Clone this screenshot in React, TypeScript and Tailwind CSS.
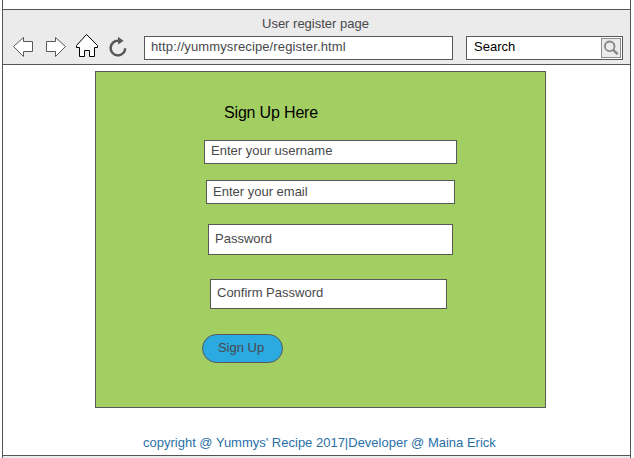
import React from 'react';

function Toolbar() {
  return (
    <header className="h-[56px] border-y border-[#555557] bg-[#ebebeb]">
      <h1 className="h-[26px] pl-[259px] pt-[4px] text-[13px] leading-[20px]">User register page</h1>
      <div className="flex h-[24px]">
        <nav className="w-[141px] shrink-0">
          <svg className="-mt-[3px]" width="141" height="27" viewBox="3 33 141 27" fill="white" stroke="#58585a">
            <path strokeWidth="1" d="M13.5 46.5 23.5 37.5V41.5H32.5V51.5H23.5V56.5Z" />
            <path strokeWidth="1" d="M65.5 46.5 55.5 37.5V41.5H46.5V51.5H55.5V56.5Z" />
            <path stroke="#000" d="M86.5 34.5 76.5 45.5V47.5H79.5V56.5H84.5V50.5H89.5V56.5H94.5V47.5H97.5V45.5Z" />
            <path fill="none" strokeWidth="2.5" d="M125.2 48.2A7.3 7.3 0 1 1 118.5 40.8" />
            <path stroke="none" fill="#58585a" d="M118 36.8 123.6 40.8 118.2 44.4Z" />
          </svg>
        </nav>
        <input
          aria-label="Address"
          defaultValue="http://yummysrecipe/register.html"
          className="mr-[13px] h-[24px] w-[309px] shrink-0 border border-[#58585a] bg-white pb-[3px] pl-[6px] text-[13px] tracking-[0.12px] outline-none"
        />
        <div className="flex h-[24px] w-[157px] shrink-0 border border-[#58585a] bg-white p-px">
          <input aria-label="Search" defaultValue="Search" className="w-[133px] pb-[3px] pl-[6px] text-[13px] text-black outline-none" />
          <button aria-label="Run search" className="h-[20px] w-[20px] border border-[#8c8c8e] bg-[#ebebeb]">
            <svg width="18" height="18" viewBox="0 0 18 18" fill="none" stroke="#858587">
              <circle cx="7.7" cy="7.3" r="4.8" strokeWidth="1.8" />
              <path d="m11.2 10.9 4.4 4.3" strokeWidth="2.4" />
            </svg>
          </button>
        </div>
      </div>
    </header>
  );
}

function SignUpForm() {
  const field = 'block border border-[#58585a] bg-white pl-[6px] text-[13px] text-[#48484a] placeholder:text-[#48484a] placeholder:opacity-100 outline-none';
  return (
    <form className="ml-[92px] h-[337px] w-[451px] border border-[#58585a] bg-[#a3cf62]">
      <h2 className="ml-[128px] mt-[30px] h-[38px] text-[16px] leading-[22px] tracking-[-0.17px] text-black">Sign Up Here</h2>
      <input className={`${field} ml-[108px] h-[24px] w-[253px] pb-[3px]`} placeholder="Enter your username" />
      <input className={`${field} ml-[110px] mt-[16px] h-[24px] w-[249px] pb-[2px]`} placeholder="Enter your email" />
      <input className={`${field} ml-[112px] mt-[20px] h-[31px] w-[245px] pb-[2px]`} placeholder="Password" />
      <input className={`${field} ml-[114px] mt-[24px] h-[30px] w-[237px] pb-[3px]`} placeholder="Confirm Password" />
      <button type="button" className="ml-[106px] mt-[25px] block h-[29px] w-[81px] rounded-full border border-[#58585a] bg-[#2ba9e1] pb-[2px] pr-[3px] text-[13px]">
        Sign Up
      </button>
    </form>
  );
}

export default function App() {
  return (
    <div className="h-[458px] w-[634px] overflow-hidden bg-white pl-[2px] font-['Liberation_Sans',Arial,sans-serif] text-[#48484a]">
      <div className="h-[458px] w-[629px] border-x border-[#555557] pt-[9px]">
        <Toolbar />
        <main className="h-[390px] pt-[6px]">
          <SignUpForm />
          <p className="ml-[140px] mt-[25px] whitespace-nowrap text-[13px] leading-[20px] text-[#2a70a8]">
            copyright @ Yummys&apos; Recipe 2017|Developer @ Maina Erick
          </p>
        </main>
        <footer className="h-[3px] border-t border-[#555557] bg-[#ebebeb]" />
      </div>
    </div>
  );
}
